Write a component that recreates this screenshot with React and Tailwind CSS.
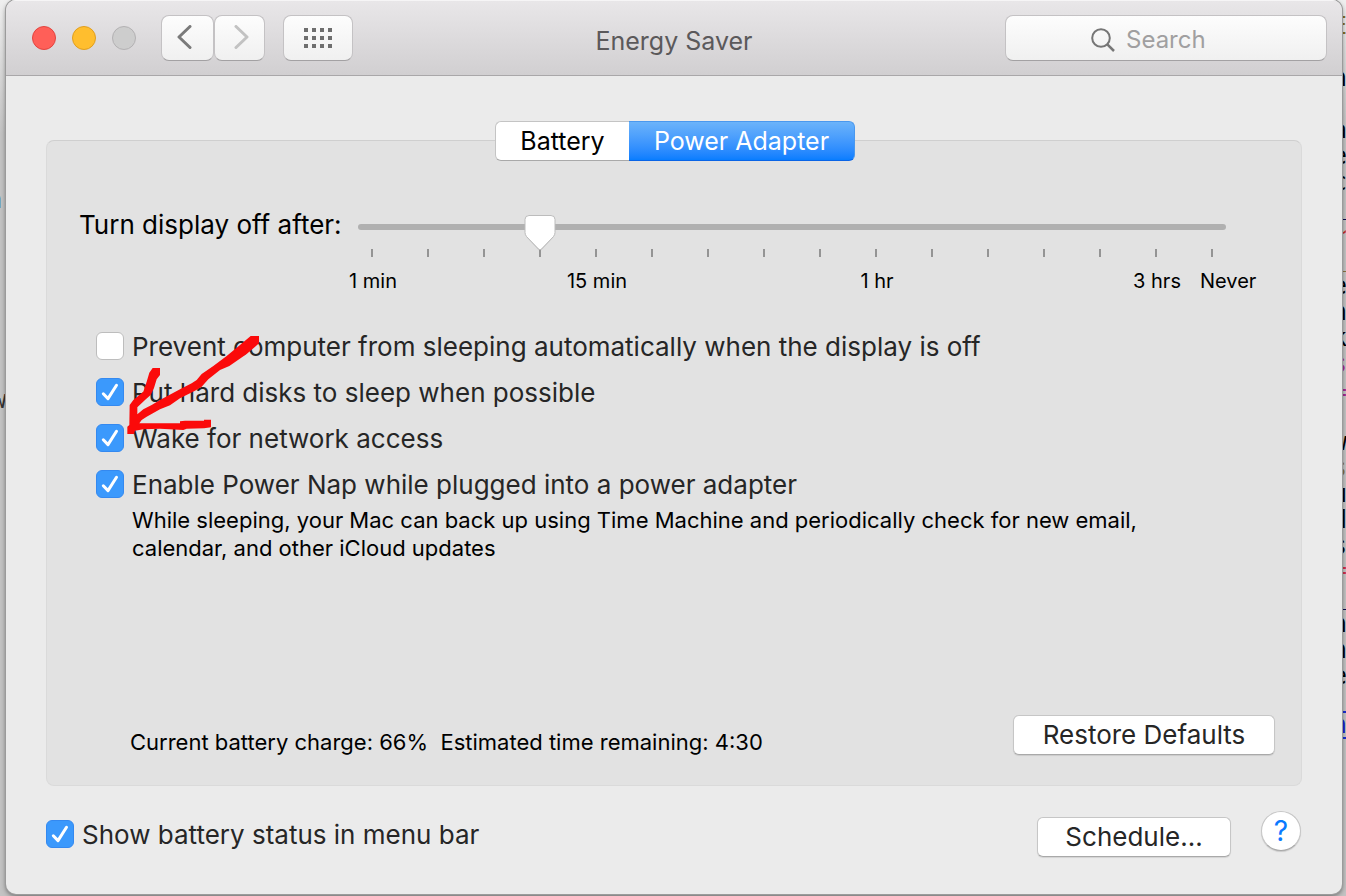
import { useState } from "react";

const TICKS = Array.from({ length: 16 }, (_, i) => i);

const SCALE_LABELS = { 0: "1 min", 4: "15 min", 9: "1 hr", 14: "3 hrs", 15: "Never" };

const BACKDROP = [
  ["E", "top-[10px] text-[#8a6d1f]"],
  ["n", "top-[62px] text-black"],
  ["a", "top-[114px] text-black"],
  ["e", "top-[140px] text-black"],
  ["c", "top-[166px] text-black"],
  ["_", "top-[190px] text-[#0a0a50]"],
  ["~", "top-[216px] text-[#c3302b]"],
  ["_", "top-[242px] text-[#8a7340]"],
  ["e", "top-[270px] text-black"],
  ["n", "top-[296px] text-black"],
  ["k", "top-[322px] text-black"],
  ["s", "top-[348px] text-[#a52a90]"],
  ["=", "top-[376px] text-[#a52a90]"],
  ["w", "top-[426px] text-black"],
  ["s", "top-[452px] text-[#8a7340]"],
  ["u", "top-[478px] text-black"],
  ["d", "top-[504px] text-black"],
  ["s", "top-[530px] text-black"],
  ["=", "top-[554px] text-[#d03048]"],
  ["_", "top-[580px] text-[#0a0a50]"],
  ["n", "top-[608px] text-black"],
  ["n", "top-[634px] text-black"],
  ["e", "top-[660px] text-black"],
  ["n", "top-[707px] text-[#1c1cd0] border-y-2 border-[#1c2ed0]"],
];

function CheckRow({ id, label, defaultChecked }) {
  return (
    <div className="flex h-7 items-center gap-2">
      <span className="relative block size-7 shrink-0">
        <input
          id={id}
          type="checkbox"
          defaultChecked={defaultChecked}
          className="peer block size-7 appearance-none rounded-md border border-[#bdbdbd] bg-white checked:border-[#3489f0] checked:bg-[#3b99fc]"
        />
        <svg
          viewBox="0 0 28 28"
          className="pointer-events-none absolute inset-0 hidden size-7 peer-checked:block"
          fill="none"
          stroke="white"
          strokeWidth="3"
          strokeLinecap="round"
          strokeLinejoin="round"
        >
          <path d="M7.3 15.8 L12 20.6 L20.5 7.3" />
        </svg>
      </span>
      <label htmlFor={id} className="whitespace-nowrap pt-[2px] text-[26px] leading-7 text-[#262626]">
        {label}
      </label>
    </div>
  );
}

function DelaySlider() {
  const [value, setValue] = useState(3);
  return (
    <div className="min-w-0 flex-1">
      <div className="relative h-[34px]">
        <div className="flex h-6 items-center">
          <div className="h-[6px] w-full rounded-full bg-[#b0b0b0]" />
        </div>
        <div className="pointer-events-none absolute inset-x-[14px] top-0 z-10">
          <svg
            viewBox="0 0 34 38"
            className="absolute -ml-[17px] h-[38px] w-[34px]"
            style={{ left: `${(value / 15) * 100}%` }}
          >
            <path
              d="M6 1 H28 Q32 1 32 5 V18 Q32 20 30.500 22 L18.500 35 Q17 36.500 15.500 35 L3.500 22 Q2 20 2 18 V5 Q2 1 6 1 Z"
              fill="#9a9a9a"
              opacity="0.4"
            />
            <path
              d="M6 0.500 H28 Q32 0.500 32 4.500 V17.500 Q32 19.500 30.500 21.500 L18.500 34 Q17 35.500 15.500 34 L3.500 21.500 Q2 19.500 2 17.500 V4.500 Q2 0.500 6 0.500 Z"
              fill="white"
              stroke="#bcbcbc"
            />
          </svg>
        </div>
        <input
          id="display-off"
          type="range"
          min="0"
          max="15"
          value={value}
          onChange={(e) => setValue(Number(e.target.value))}
          className="absolute inset-0 h-full w-full cursor-pointer opacity-0"
        />
      </div>
      <div className="flex h-2 justify-between px-[13px]">
        {TICKS.map((i) => (
          <span key={i} className="w-[2px] bg-[#949494]" />
        ))}
      </div>
      <div className="-mx-[14px] mt-3 grid grid-cols-[repeat(16,minmax(0,1fr))] text-[20px] leading-6 text-black">
        {TICKS.map((i) => (
          <span
            key={i}
            className={
              i === 15
                ? "flex justify-start whitespace-nowrap pl-4"
                : "flex justify-center whitespace-nowrap pl-[2px]"
            }
          >
            {SCALE_LABELS[i]}
          </span>
        ))}
      </div>
    </div>
  );
}

const toolButton =
  "flex h-[46px] items-center justify-center rounded-lg border border-[#c4c2c4] border-b-[#a3a1a3] bg-linear-to-b from-[#fdfdfd] to-[#f0f0f0]";
const pushButton =
  "h-10 rounded-md border border-[#c6c6c6] border-b-[#a9a9a9] bg-white text-[26px] leading-7 text-[#262626] shadow-[0_1px_1px_rgba(0,0,0,0.1)]";

function TitleBar() {
  return (
    <header className="grid h-[76px] grid-cols-[1fr_auto_1fr] items-center border-b border-[#a9a7a9] bg-linear-to-b from-[#e9e7e9] to-[#d1cfd1] px-[15px] shadow-[inset_0_1px_0_#f6f5f6]">
      <div className="flex items-center pl-[11px]">
        <div className="flex gap-4">
          <button aria-label="Close" className="size-6 rounded-full border border-[#e2443f] bg-[#ff5f58]" />
          <button aria-label="Minimize" className="size-6 rounded-full border border-[#e09e1f] bg-[#ffbe2e]" />
          <button aria-label="Zoom" disabled className="size-6 rounded-full border border-[#b3b1b3] bg-[#cdcdcd]" />
        </div>
        <div className="ml-[25px] flex">
          <button aria-label="Back" className={`${toolButton} w-[53px]`}>
            <svg viewBox="0 0 16 26" className="mr-2 h-[26px] w-4" fill="none" stroke="#7a7a7a" strokeWidth="3" strokeLinecap="round" strokeLinejoin="round">
              <path d="M14 1.500 L3 12 L14 22.500" />
            </svg>
          </button>
          <button aria-label="Forward" disabled className={`${toolButton} w-[51px]`}>
            <svg viewBox="0 0 16 26" className="ml-1 h-[26px] w-4" fill="none" stroke="#c2c2c2" strokeWidth="3" strokeLinecap="round" strokeLinejoin="round">
              <path d="M2 1.500 L13 12 L2 22.500" />
            </svg>
          </button>
        </div>
        <button aria-label="Show all preferences" className={`${toolButton} ml-[18px] w-[70px]`}>
          <svg viewBox="0 0 28 20" className="h-5 w-7" fill="#6e6e6e">
            {[0, 8, 16].map((y) =>
              [0, 8, 16, 24].map((x) => <rect key={`${x}-${y}`} x={x} y={y} width="4" height="4" />)
            )}
          </svg>
        </button>
      </div>
      <h1 className="pt-[6px] text-[25px] leading-8 text-[#5b595b]">Energy Saver</h1>
      <label className={`${toolButton} w-[322px] gap-[10px] justify-self-end pl-[84px]`}>
        <svg viewBox="0 0 26 26" className="mt-1 size-[26px] shrink-0" fill="none" stroke="#767676" strokeWidth="2">
          <circle cx="11" cy="11" r="8.800" />
          <path d="M17.300 17.300 L24 24" strokeWidth="2.500" />
        </svg>
        <input
          type="search"
          placeholder="Search"
          aria-label="Search"
          className="mt-1 min-w-0 flex-1 appearance-none bg-transparent text-[24px] leading-8 outline-none placeholder:text-[#a09fa0]"
        />
      </label>
    </header>
  );
}

function ArrowMark() {
  return (
    <svg viewBox="0 0 600 570" className="pointer-events-none absolute -left-4 -top-3 h-[190px] w-[200px]">
      <polygon
        fill="#fb0a0a"
        points="512,48 537,48 537,70 500,102 448,138 420,150 385,178 365,200 345,212 300,235 270,256 240,268 200,290 185,300 178,310 300,310 300,304 315,302 372,302 372,299 393,299 393,322 372,325 320,326 310,330 240,326 190,328 165,332 162,342 142,342 142,320 148,315 149,255 160,240 190,215 200,185 208,158 218,144 240,144 240,165 230,178 222,204 212,225 195,240 172,262 172,283 190,268 215,255 240,240 300,208 335,190 350,180 365,162 400,138 440,108 480,75"
      />
    </svg>
  );
}

export default function App() {
  return (
    <div className="relative min-h-screen overflow-hidden bg-linear-to-b from-[#efefef] via-[#c3c3c3] via-15% to-[#c3c3c3] pb-[2px] pl-[6px] pr-1 font-['Inter',sans-serif]">
      <div aria-hidden="true" className="absolute -right-px bottom-0 left-0 top-1 font-['DejaVu_Sans_Mono',monospace] text-[24px] leading-6">
        {BACKDROP.map(([text, style], i) => (
          <span key={i} className={`absolute right-0 ${style}`}>
            {text}
          </span>
        ))}
        <span className="absolute -left-[12px] top-[184px] text-[#4f78b8]">n</span>
        <span className="absolute -left-[8px] top-[384px] text-[#333333]">w</span>
      </div>

      <main className="relative flex min-h-[calc(100vh-2px)] flex-col overflow-hidden rounded-[10px] bg-[#ebebeb] shadow-[0_0_0_1px_#9b9b9b,0_2px_5px_rgba(0,0,0,0.5)]">
        <TitleBar />

        <div className="flex flex-1 flex-col px-10 pb-9 pt-16">
          <section className="flex flex-1 flex-col rounded-lg border border-[#dadada] border-t-[#cfcfcf] bg-[#e2e2e2] pb-[30px]">
            <div role="tablist" className="-mt-5 flex justify-center pl-[2px] text-[25px] leading-8">
              <button
                role="tab"
                aria-selected="false"
                className="h-10 w-[134px] rounded-l-md border border-r-0 border-[#c4c4c4] border-b-[#a9a9a9] bg-white text-black"
              >
                Battery
              </button>
              <button
                role="tab"
                aria-selected="true"
                className="h-10 w-[226px] rounded-r-md border border-l-0 border-[#4a98ee] border-b-[#0a64e6] bg-linear-to-b from-[#6bb3fa] to-[#077dff] text-white"
              >
                Power Adapter
              </button>
            </div>

            <div className="mt-[54px] flex gap-5 pl-8 pr-[75px]">
              <label htmlFor="display-off" className="w-[259px] shrink-0 whitespace-nowrap text-[26px] leading-5 text-black">
                Turn display off after:
              </label>
              <DelaySlider />
            </div>

            <div className="relative mt-[39px] flex flex-col gap-[18px] pl-[49px]">
              <CheckRow id="prevent-sleep" label="Prevent computer from sleeping automatically when the display is off" />
              <CheckRow id="disks" label="Put hard disks to sleep when possible" defaultChecked />
              <CheckRow id="wake" label="Wake for network access" defaultChecked />
              <CheckRow id="nap" label="Enable Power Nap while plugged into a power adapter" defaultChecked />
              <div className="pointer-events-none absolute left-[49px] top-0">
                <ArrowMark />
              </div>
            </div>
            <p className="ml-[85px] mt-2 max-w-[1040px] text-[22px] leading-7 text-black">
              While sleeping, your Mac can back up using Time Machine and periodically check for new email,
              <br />
              calendar, and other iCloud updates
            </p>

            <div className="mt-auto flex items-end justify-between pl-[83px] pr-[26px]">
              <p className="whitespace-pre text-[22px] leading-[26px] text-black">
                {"Current battery charge: 66%  Estimated time remaining: 4:30"}
              </p>
              <button className={`${pushButton} w-[262px]`}>Restore Defaults</button>
            </div>
          </section>

          <footer className="flex items-start justify-between pr-px pt-[31px]">
            <div className="pt-[3px]">
              <CheckRow id="menu-bar" label="Show battery status in menu bar" defaultChecked />
            </div>
            <div className="flex items-start gap-[30px] pb-px">
              <button className={`${pushButton} w-[194px]`}>Schedule...</button>
              <button
                aria-label="Help"
                className="-mt-[6px] flex size-10 items-center justify-center rounded-full border border-[#c6c6c6] border-b-[#a9a9a9] bg-white text-[28px] leading-8 text-[#0a7aff] shadow-[0_1px_1px_rgba(0,0,0,0.15)]"
              >
                ?
              </button>
            </div>
          </footer>
        </div>
      </main>
    </div>
  );
}
